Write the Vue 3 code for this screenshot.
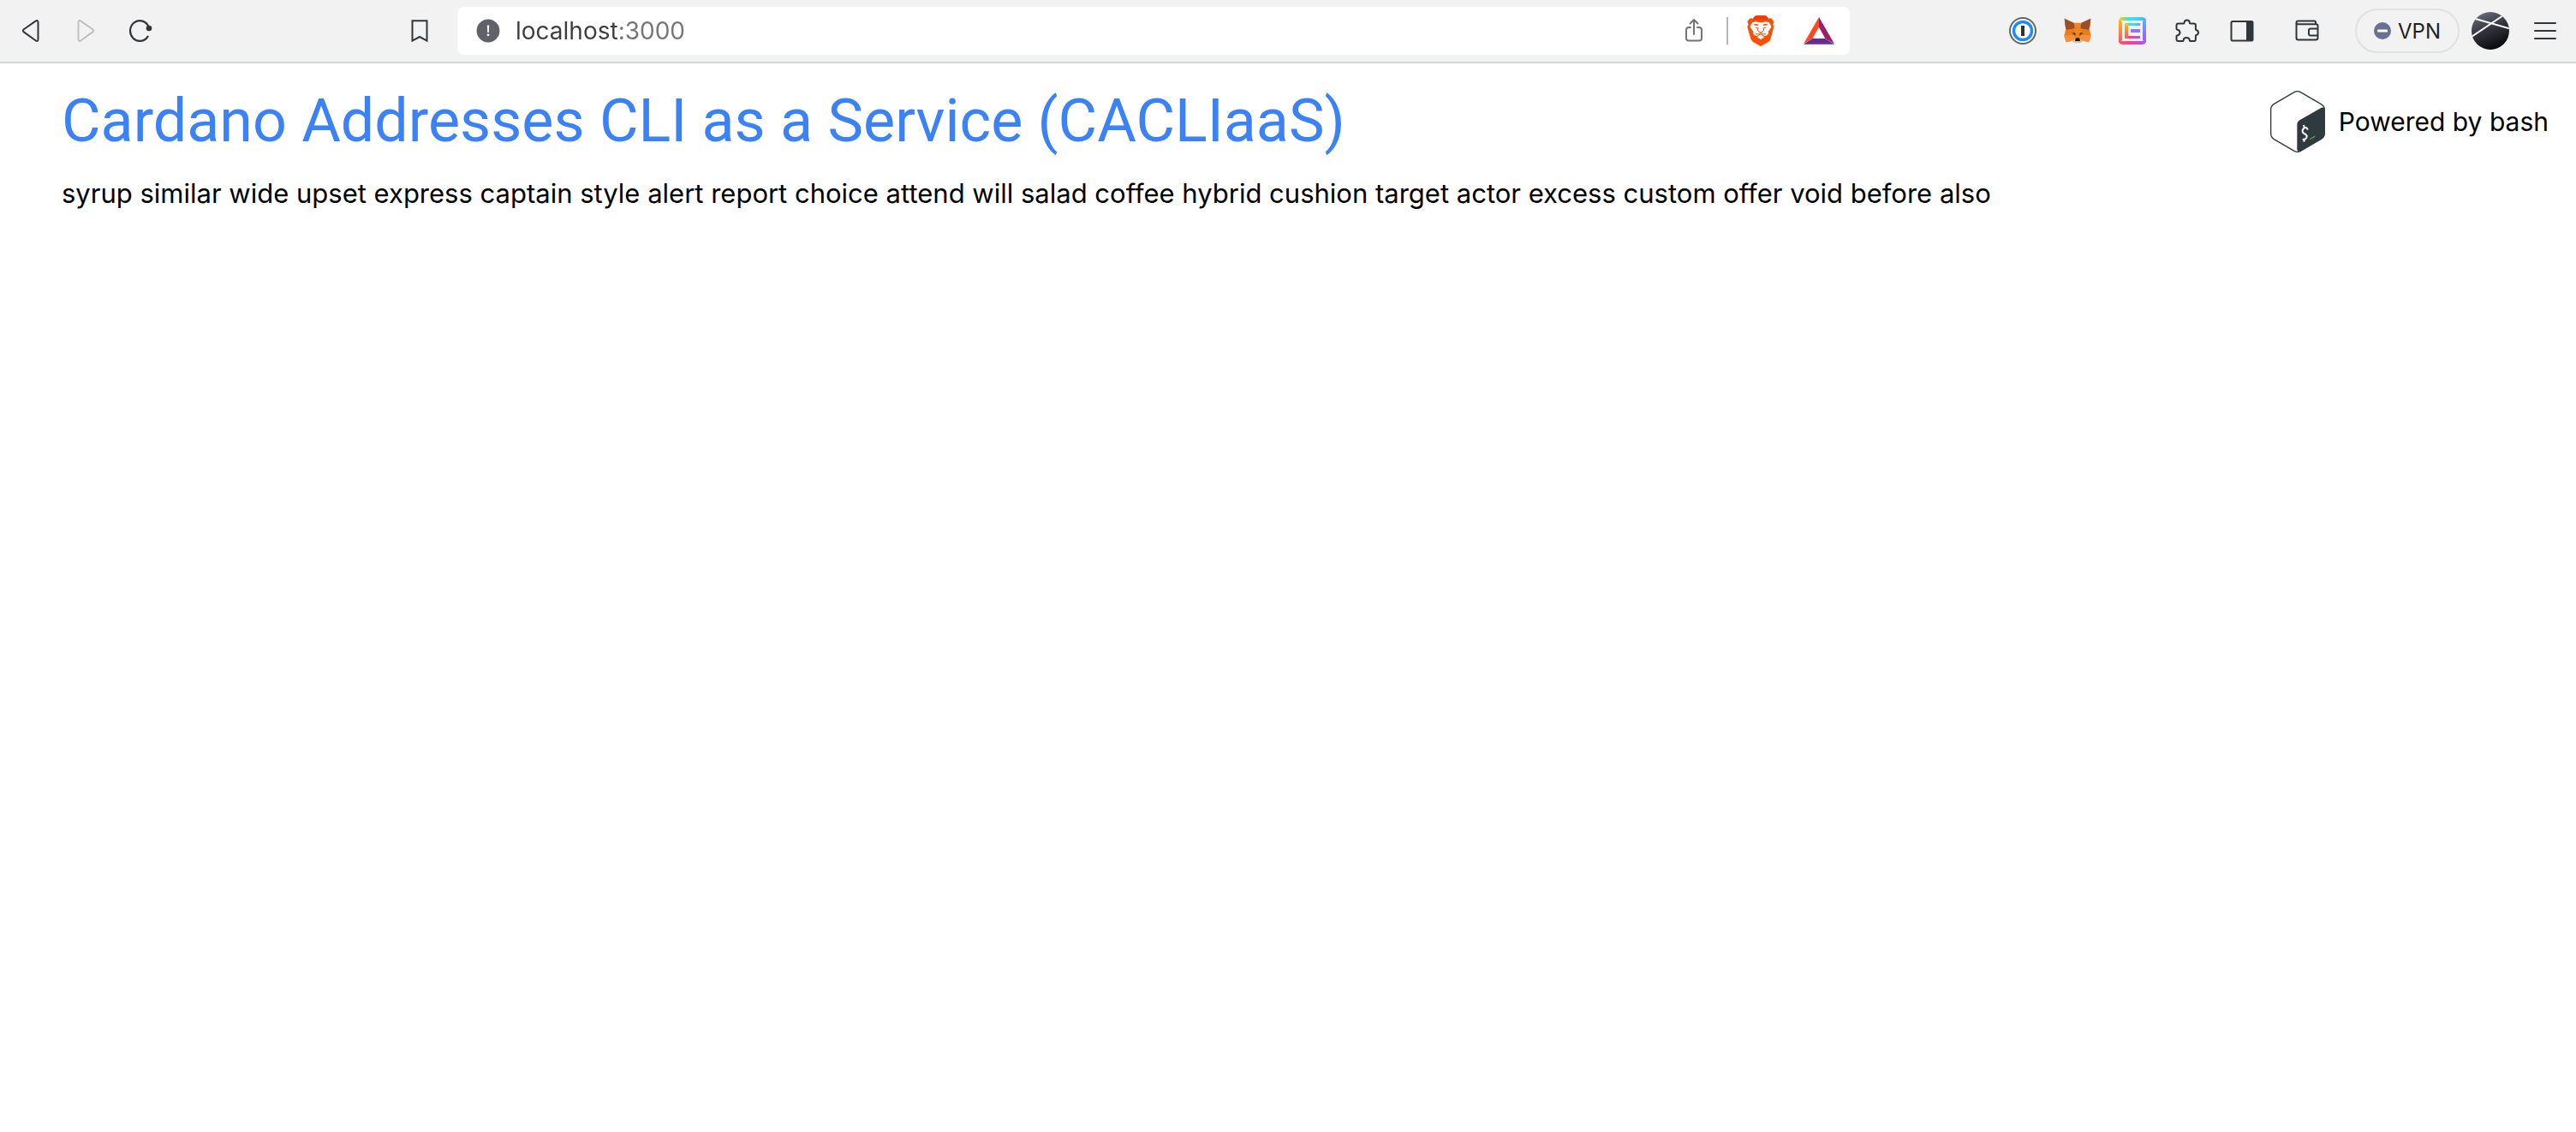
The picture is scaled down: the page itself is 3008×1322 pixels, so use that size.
<script setup>
import { ref } from 'vue'

const address = ref('localhost:3000')
const mnemonic =
  'syrup similar wide upset express captain style alert report choice attend will salad coffee hybrid cushion target actor excess custom offer void before also'
</script>

<template>
  <div class="browser">
    <nav class="toolbar" aria-label="Browser toolbar">
      <div class="group start">
        <div class="history">
          <button class="tool" aria-label="Back">
            <svg width="24" height="30" viewBox="0 0 24 30" fill="none" stroke="#303639" stroke-width="2" stroke-linejoin="round">
              <path d="M17.5 3.6 3.8 13.2q-1.8 1.6 0 3.2l13.7 9.9q2.9 1.6 3-1.3V5q-.1-3-3-1.4Z" />
            </svg>
          </button>
          <button class="tool" aria-label="Forward" disabled>
            <svg width="24" height="30" viewBox="0 0 24 30" fill="none" stroke="#bfbfbf" stroke-width="2" stroke-linejoin="round">
              <path d="M6.5 3.6 20.2 13.2q1.8 1.6 0 3.2L6.5 26.3q-2.900 1.600-3-1.300V5q.1-3 3-1.400Z" />
            </svg>
          </button>
          <button class="tool" aria-label="Reload">
            <svg width="28" height="28" viewBox="0 0 28 28">
              <path d="M23.600 9.500A11.200 11.900 0 1 0 22.600 20.600" fill="none" stroke="#303639" stroke-width="2.200" stroke-linecap="round" />
              <circle cx="24" cy="11" r="3.300" fill="#303639" />
            </svg>
          </button>
        </div>
        <button class="tool" aria-label="Bookmark this page">
          <svg width="22" height="28" viewBox="0 0 22 28" fill="none" stroke="#303639" stroke-width="2">
            <path d="M2.500 2.200h17v23.400L11 21l-8.500 4.600Z" />
          </svg>
        </button>
      </div>

      <div class="omnibox">
        <button class="site-info" aria-label="Site information">
          <svg width="28" height="28" viewBox="0 0 28 28">
            <circle cx="14" cy="14" r="13.400" fill="#5f6269" />
            <path d="M12.800 7.500h2.400l-.4 8.500h-1.600Z" fill="#fff" />
            <circle cx="14" cy="18.800" r="1.400" fill="#fff" />
          </svg>
        </button>
        <input v-model="address" class="address" type="text" aria-label="Address" spellcheck="false" />
        <button class="share" aria-label="Share">
          <svg width="24" height="30" viewBox="0 0 24 30" fill="none" stroke="#757575" stroke-width="2" stroke-linecap="round" stroke-linejoin="round">
            <path d="M8 11H6q-3 0-3 3v9.500q0 3 3 3h12q3 0 3-3V14q0-3-3-3h-2M12 19V2.500M7.500 6.500 12 2l4.500 4.500" />
          </svg>
        </button>
        <span class="divider"></span>
        <button class="shield" aria-label="Brave Shields">
          <svg width="32" height="36" viewBox="0 0 96 108">
            <path d="M30 1h36l10 10 9-1 9 12-3 9 3 9-11 42q-2 7-8 11L48 108 21 93q-6-4-8-11L1 40l4-9-4-9 10-12 9 1Z" fill="#fb4f04" />
            <path d="M30 1h36l10 10-9 4H29l-9-4Z" fill="#ee3f00" />
            <path d="m32 22-13 2-9 16 12 17-1 8 12 8 15-9 15 9 12-8-1-8 12-17-9-16-13-2-10 3H42Z" fill="#fff" />
            <path d="M23 31q10-2 18 1l-3 4-15-2ZM73 31q-10-2-18 1l3 4 15-2ZM26 40q6 4 13 1l-2 4q-8 1-11-5ZM70 40q-6 4-13 1l2 4q8 1 11-5Z" fill="#fb4f04" />
            <path d="m39 43-2 8 5 6 6 3 6-3 5-6-2-8M48 60v5M30 65l18 1 18-1" fill="none" stroke="#fb4f04" stroke-width="3" />
            <path d="m35 76 13-9 13 9-13 9Z" fill="#fff" />
          </svg>
        </button>
        <button class="rewards" aria-label="Brave Rewards">
          <svg width="36" height="32" viewBox="0 0 108 96">
            <path d="M54 0v35L31 75 0 94Z" fill="#ff4724" />
            <path d="m54 0 54 94-32-19-22-40Z" fill="#9e1f63" />
            <path d="M0 95 31 75h45l32 20Z" fill="#662d91" />
          </svg>
        </button>
      </div>

      <div class="group end">
        <div class="extensions">
          <button class="tool" aria-label="1Password">
            <svg width="32" height="32" viewBox="0 0 32 32">
              <circle cx="16" cy="16" r="15" fill="#fff" stroke="#646464" stroke-width="2" />
              <circle cx="16" cy="16" r="10.500" fill="#fff" stroke="#1a8cff" stroke-width="3.400" />
              <path d="M14 10h4v12h-4Z" fill="#303030" />
            </svg>
          </button>
          <button class="tool" aria-label="MetaMask">
            <svg width="32" height="30" viewBox="0 0 96 90">
              <path d="m2 2 32 15h28L94 2l-4 38 5 23-7 22-20-5-11 7H39l-11-7-20 5-7-22 5-23Z" fill="#f08421" />
              <path d="m2 2 33 15 3 20L10 42 5 29ZM94 2 61 17l-3 20 28 5 5-13Z" fill="#994f27" />
              <path d="m1 61 27-1 11 5 2 8-13 7-20 5ZM95 61l-27-1-11 5-2 8 13 7 20 5Z" fill="#f5913a" />
              <path d="m10 42 28-5-4 23H2ZM86 42l-28-5 4 23h32Z" fill="#ea7c1c" />
              <path d="m28 53 11-2 3 11ZM68 53l-11-2-3 11Z" fill="#4b3d35" />
              <path d="m28 79 12-5h16l12 5-11 9H39Z" fill="#d7c1b3" />
              <path d="m41 72 3-2h8l3 2 2 9H39Z" fill="#16171b" />
            </svg>
          </button>
          <button class="tool" aria-label="Eternl">
            <svg width="32" height="32" viewBox="0 0 32 32">
              <defs>
                <linearGradient id="rim-top" x1="0" y1="0" x2="1" y2="0">
                  <stop offset="0" stop-color="#ffc400" />
                  <stop offset=".3" stop-color="#3be8d2" />
                  <stop offset=".6" stop-color="#35dcff" />
                  <stop offset="1" stop-color="#68a4ff" />
                </linearGradient>
                <linearGradient id="rim-bottom" x1="0" y1="0" x2="1" y2="0">
                  <stop offset="0" stop-color="#ff5a5f" />
                  <stop offset=".4" stop-color="#ff3d91" />
                  <stop offset="1" stop-color="#9b5cff" />
                </linearGradient>
                <linearGradient id="rim-left" x1="0" y1="0" x2="0" y2="1">
                  <stop offset="0" stop-color="#ffc400" />
                  <stop offset="1" stop-color="#ff4f72" />
                </linearGradient>
                <linearGradient id="rim-right" x1="0" y1="0" x2="0" y2="1">
                  <stop offset="0" stop-color="#5aaeff" />
                  <stop offset="1" stop-color="#a755ff" />
                </linearGradient>
              </defs>
              <path d="M5 0h22q5 0 5 5l-4-1H4L1 2q1-2 4-2Z" fill="url(#rim-top)" />
              <path d="M0 27q0 5 5 5h22q5 0 5-5l-4 1H4Z" fill="url(#rim-bottom)" />
              <path d="M1 2Q0 3 0 5v22q0 2 1 3l3-3V5Z" fill="url(#rim-left)" />
              <path d="M31 2q1 1 1 3v22q0 2-1 3l-3-3V5Z" fill="url(#rim-right)" />
              <path d="M7 7h18v3H11Z" fill="url(#rim-top)" />
              <path d="m7 25 4-3h14v3Z" fill="url(#rim-bottom)" />
              <path d="m7 7 4 3v12l-4 3Z" fill="url(#rim-left)" />
              <path d="M14 14h11v4H14Z" fill="#8d77f5" />
            </svg>
          </button>
          <button class="tool" aria-label="Extensions">
            <svg width="28" height="28" viewBox="0 0 28 28" fill="none" stroke="#303639" stroke-width="2" stroke-linejoin="round">
              <path d="M3.500 5.500h6q1.200 0 1.200-1.500 0-2.500 3-2.500t3 2.500q0 1.500 1.200 1.500h4q2 0 2 2V12q0 1 1 1.200 2.100.6 2.100 2.800T24.900 18.800q-1 .2-1 1.200v4q0 2-2 2h-4q-1.200 0-1.200-1.200 0-2.800-3.500-2.800t-3.500 2.800Q9.700 26 8.500 26h-5q-2 0-2-2v-3.500q0-1 1.200-1.300 2.800-.6 2.800-3.200t-2.800-3.200q-1.200-.3-1.200-1.300v-4q0-2 2-2Z" />
            </svg>
          </button>
          <button class="tool" aria-label="Sidebar">
            <svg width="28" height="26" viewBox="0 0 28 26">
              <rect x="1.500" y="2" width="25" height="22.500" rx="1.500" fill="none" stroke="#303639" stroke-width="2" />
              <path d="M19 2h8v22h-8Z" fill="#303639" />
            </svg>
          </button>
        </div>
        <button class="tool" aria-label="Wallet">
          <svg width="28" height="26" viewBox="0 0 28 26" fill="none" stroke="#303639" stroke-width="2" stroke-linejoin="round">
            <path d="M24 5V3q0-1.500-1.500-1.500H3.500Q1.500 1.500 1.500 3.500v18q0 2 2 2H24q2.500 0 2.500-2V7q0-1.700-2-1.700H3.500q-2 0-2-1.800M26 10.500H18q-2 0-2 2v4q0 2 2 2h8" />
          </svg>
        </button>
        <button class="vpn">
          <svg width="20" height="20" viewBox="0 0 20 20">
            <circle cx="10" cy="10" r="10" fill="#6b7094" />
            <rect x="4" y="8.500" width="12" height="3" rx="1" fill="#fff" />
          </svg>
          VPN
        </button>
        <button class="profile" aria-label="Profile">
          <svg width="44" height="44" viewBox="0 0 44 44">
            <defs>
              <linearGradient id="planet" x1=".2" y1="0" x2=".6" y2="1">
                <stop offset="0" stop-color="#6b6d7e" />
                <stop offset=".5" stop-color="#30333a" />
                <stop offset="1" stop-color="#07090b" />
              </linearGradient>
              <clipPath id="disc"><circle cx="22" cy="22" r="22" /></clipPath>
            </defs>
            <g clip-path="url(#disc)">
              <path d="M0 0h44v44H0Z" fill="url(#planet)" />
              <path d="M3 7.500 45 19.500M0 29 37 4" stroke="#fff" stroke-width="2" />
            </g>
          </svg>
        </button>
        <button class="menu" aria-label="Menu">
          <svg width="28" height="24" viewBox="0 0 28 24" stroke="#303639" stroke-width="2" stroke-linecap="round">
            <path d="M2 3h24M2 12h24M2 21h24" />
          </svg>
        </button>
      </div>
    </nav>

    <main class="page">
      <header class="masthead">
        <h1>Cardano Addresses CLI as a Service (CACLIaaS)</h1>
        <div class="powered">
          <svg width="64" height="72" viewBox="0 0 192 216" aria-hidden="true">
            <path d="M84 5q11-6 22 0l72 42q12 7 12 19v84q0 12-12 19l-72 42q-11 6-22 0l-72-42q-10-7-10-19V66q0-12 10-19Z" fill="#fff" stroke="#2f3a3e" stroke-width="4" />
            <path d="M94 119q0-10 9-16l75-43q12-5 12 6v84q0 12-12 19l-72 42q-12 7-12-6Z" fill="#2f3a3e" />
            <path d="m117 120 2 8M119 170l-1 9M131 137q-2-10-11-7-10 6-6 16 3 4 10 7 6 4 3 11-5 9-14 5" fill="none" stroke="#fff" stroke-width="6" />
            <path d="m139 167 18-10v5l-18 10Z" fill="#37ab47" />
          </svg>
          <span>Powered by bash</span>
        </div>
      </header>
      <p class="mnemonic">{{ mnemonic }}</p>
    </main>
  </div>
</template>

<style>
body {
  margin: 0;
  background: #fff;
}
</style>

<style scoped>
.browser {
  font-family: Inter, "Liberation Sans", sans-serif;
  color: #000;
}

button {
  display: flex;
  align-items: center;
  justify-content: center;
  flex: none;
  margin: 0;
  padding: 0;
  border: 0;
  background: none;
  font: inherit;
}

svg {
  display: block;
  flex: none;
}

.toolbar {
  display: flex;
  align-items: center;
  height: 72px;
  background: #f2f2f2;
  border-bottom: 2px solid #d3d8dc;
}

.group {
  display: flex;
  align-items: center;
  flex: none;
}

.start {
  box-sizing: border-box;
  justify-content: space-between;
  width: 534px;
  padding: 0 12px 0 4px;
}

.end {
  box-sizing: border-box;
  justify-content: flex-end;
  width: 848px;
  padding-right: 20px;
}

.history,
.extensions {
  display: flex;
}

.extensions {
  margin-right: 12px;
}

.tool {
  width: 64px;
  height: 56px;
}

.omnibox {
  display: flex;
  align-items: center;
  flex: 1;
  min-width: 0;
  box-sizing: border-box;
  height: 56px;
  padding: 0 18px 0 22px;
  border-radius: 8px;
  background: #fff;
}

.address {
  flex: 1;
  min-width: 0;
  margin: 0 16px 0 18px;
  padding: 0;
  border: 0;
  outline: 0;
  font: 28px/40px Inter, "Liberation Sans", sans-serif;
  color: transparent;
  background: linear-gradient(90deg, #3c3d3f 120px, #757575 120px);
  background-clip: text;
  -webkit-background-clip: text;
  caret-color: #3c3d3f;
}

.divider {
  width: 2px;
  height: 32px;
  margin: 0 22px 0 26px;
  background: #b4b8bc;
}

.rewards {
  margin-left: 34px;
}

.vpn {
  gap: 8px;
  box-sizing: border-box;
  width: 122px;
  height: 52px;
  margin-left: 24px;
  border: 2px solid #e1e1e1;
  border-radius: 26px;
  font-size: 24px;
  color: #1d1f25;
}

.profile {
  margin: 0 14px;
}

.menu {
  width: 56px;
  height: 56px;
  margin-right: -12px;
}

.masthead {
  display: flex;
  align-items: flex-start;
  justify-content: space-between;
  padding: 32px 32px 0 72px;
}

h1 {
  margin: 0;
  font-family: Roboto, "Liberation Sans", sans-serif;
  font-size: 70px;
  font-weight: 400;
  line-height: 70px;
  color: #3b82f6;
}

.powered {
  display: flex;
  align-items: center;
  gap: 16px;
  font-size: 30px;
  line-height: 48px;
  white-space: nowrap;
}

.mnemonic {
  margin: 24px 72px 0;
  font-size: 31px;
  line-height: 48px;
}
</style>
